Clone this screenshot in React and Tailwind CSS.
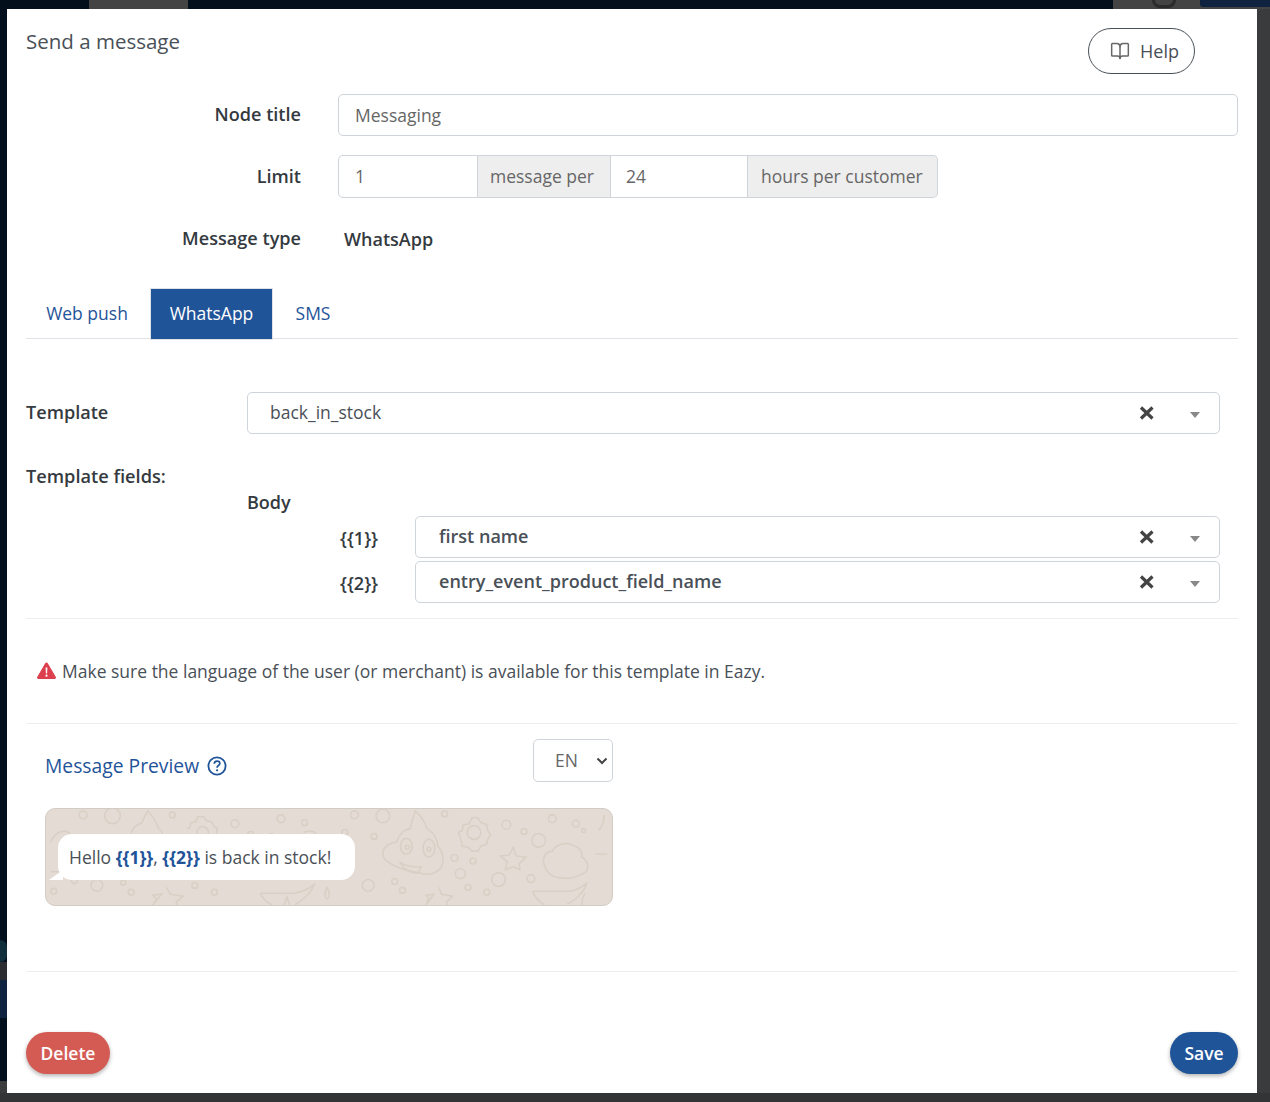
import { BookOpen } from 'lucide-react';

const Label = ({ children }) => (
  <div className="w-[275px] shrink-0 pb-[2px] text-right text-[18.1px] leading-[24px] font-semibold text-[#343a40]">{children}</div>
);

// react-select style field with clear cross and caret
const SelectField = ({ value, bold, className }) => (
  <div className={`flex h-[42px] items-center rounded-[5px] border border-[#ced4da] bg-white ${bold ? 'pl-[23px]' : 'pl-[22px]'} ${className}`}>
    <span className={`flex-1 text-[#495057] ${bold ? 'pb-[1px] text-[18.05px] font-semibold' : 'pb-[2px] text-[17.5px]'}`}>{value}</span>
    <svg width="16" height="16" viewBox="0 0 16 16" className="mr-[35px]">
      <path d="M2 2.5l11.5 11M13.5 2.5L2 13.5" stroke="#444" strokeWidth="3.2" />
    </svg>
    <svg width="10" height="6" viewBox="0 0 10 6" className="mr-[19px] mt-[3px]">
      <path d="M0 0h10L5 6z" fill="#888" />
    </svg>
  </div>
);

const dots = [
  [33, 6, 4], [63, 7, 8], [124, 6, 3], [188, 15, 4], [235, 10, 4], [259, 14, 3], [310, 6, 4], [330, 28, 3],
  [339, 7, 7], [402, 5, 3], [465, 16, 4.5], [483, 23, 3], [512, 10, 4], [536, 15, 3.5], [544, 22, 2], [498, 32, 7],
  [412, 50, 3.5], [431, 53, 3], [418, 66, 5], [457, 72, 7], [426, 80, 3], [445, 85, 3], [490, 71, 4], [324, 78, 6],
  [351, 74, 3], [359, 83, 3], [167, 85, 3], [147, 78, 3], [82, 85, 3], [74, 75, 2.5], [47, 78, 6], [24, 73, 3],
  [204, 26, 3], [225, 28, 3], [300, 24, 3], [3, 84, 3],
];

// chat wallpaper doodles behind the bubble
const WallpaperPattern = () => (
  <svg className="absolute inset-0 h-full w-full" viewBox="0 0 568 98" fill="none" stroke="#d9cfc5" strokeWidth="1.6">
    {dots.map(([cx, cy, r]) => (
      <circle key={`${cx}-${cy}`} cx={cx} cy={cy} r={r} />
    ))}
    {/* poop */}
    <path d="M82 25c2-8 8-10 11-11 2-5 4-9 6-12 5 5 9 12 11 18 3 2 4 4 4 6" />
    <path d="M339 46c0-8 8-12 14-12 3-10 10-14 14-14 1-6 3-12 5-18 6 5 10 12 12 18 8 5 11 12 11 18 6 6 7 16 3 22-5 7-14 8-22 5-14-2-26-6-33-12-3-2-4-4-4-7z" />
    <ellipse cx="363" cy="38" rx="6" ry="8" />
    <circle cx="364" cy="39" r="2" />
    <ellipse cx="386" cy="40" rx="6" ry="9" />
    <circle cx="386" cy="41" r="2" />
    <path d="M356 54c6 4 14 6 22 5l-3 6c-7 1-14-3-19-11z" />
    {/* gears */}
    <path d="M139 20l3-1 1-5 5-1 2-5h6l3 4 5 1 3 5 3 2-1 6-3 3v5" />
    <circle cx="155" cy="24" r="6" />
    <path d="M416 24l4-2 1-6 6-1 3-6 6 0 3 5 6 2 1 6 3 4-3 5-1 5-6 2-3 5-6 0-4-4-6-1-1-6z" />
    <circle cx="432" cy="24" r="7" />
    {/* stars */}
    <path d="M472 39l3 9 10 1-7 7 1 6-7-3-8 3 2-8-7-6 9-1z" />
    <path d="M396 80l3 7 11 2-6 6 1 4M383 98l3-7-3-3 8-1z" />
    <path d="M118 80l4 7 13 2-7 6 1 4M104 98l4-6-4-4 9-1z" />
    {/* clouds */}
    <path d="M504 58c-3-8 1-15 8-15 3-7 14-10 21-6 7 2 10 6 9 12 7 4 8 12 3 16-7 5-18 7-27 5-7-1-12-6-14-12z" />
    <path d="M0 34c4-12 16-14 20-8" />
    {/* bowls */}
    <path d="M492 84h38c7-1 12-4 17-8-2 8-12 18-20 21" />
    <path d="M214 86h34c8-1 16-5 21-9-3 8-12 16-20 21M214 86c2 6 8 10 12 12" />
    <path d="M492 84c2 6 7 11 12 14" />
    <path d="M282 80c-3 5-3 10 0 12 3-2 3-7 0-12z" />
    <path d="M258 24c8-4 15 0 16 8" />
    <path d="M0 64h18M556 46h12M559 22c4-4 6-8 6-16" />
    <path d="M542 98c0-6 3-12 3-12M238 98l3-8 3 8" />
  </svg>
);

const App = () => {
  return (
    <div className="flex h-[1102px] w-[1270px] flex-col overflow-hidden bg-[#3a3b3d] font-['Open_Sans',sans-serif]">
      {/* dimmed page behind the modal */}
      <div className="flex h-[9px] shrink-0 bg-[#03101c]">
        <div className="ml-[89px] w-[99px] bg-[#444444]" />
        <div className="ml-auto flex w-[87px] justify-center bg-[#444444] pl-[14px]">
          <div className="h-[8px] w-[24px] rounded-b-full border-x-[3px] border-b-[3px] border-[#2b2b2b]" />
        </div>
        <div className="w-[70px] bg-[#444444]">
          <div className="h-[7px] rounded-bl-[3px] bg-[#0f2340]" />
        </div>
      </div>
      <div className="flex h-[1084px] shrink-0">
        <div className="flex w-[7px] shrink-0 flex-col bg-[#020f1c]">
          <div className="h-[931px]" />
          <div className="h-[22px] rounded-r-full bg-[#12303c]" />
          <div className="h-[18px] bg-[#2b2d30]" />
          <div className="h-[38px] bg-[#0f2340]" />
          <div className="h-[63px]" />
          <div className="flex-1 bg-[#3a3b3d]" />
        </div>
        <div className="w-[1250px] shrink-0 bg-white px-[19px] text-[#495057]">
          <div className="flex items-start justify-between">
            <h2 className="mt-[18px] text-[20.5px] leading-[28px] font-medium text-[#495057]">Send a message</h2>
            <button className="mt-[19px] mr-[43px] flex h-[46px] w-[107px] items-center gap-[10px] rounded-full border border-[#495057] pl-[21px] text-[18px] text-[#495057]">
              <BookOpen size={20} strokeWidth={1.8} className="text-[#666]" />
              Help
            </button>
          </div>

          <div className="mt-[20px] flex items-center">
            <Label>Node title</Label>
            <div className="ml-[37px] flex h-[42px] flex-1 items-center rounded-[5px] border border-[#ced4da] px-4 text-[17.5px] text-[#666]">
              Messaging
            </div>
          </div>

          <div className="mt-[19px] flex items-center">
            <Label>Limit</Label>
            <div className="ml-[37px] flex h-[43px] text-[17.5px] text-[#666]">
              <div className="flex w-[140px] items-center rounded-l-[5px] border border-[#ced4da] px-4">1</div>
              <div className="flex w-[133px] items-center border-y border-r border-[#ced4da] bg-[#eeeeee] pl-[12px]">message per</div>
              <div className="flex w-[137px] items-center border-y border-r border-[#ced4da] px-[15px]">24</div>
              <div className="flex w-[190px] items-center rounded-r-[5px] border-y border-r border-[#ced4da] bg-[#eeeeee] pl-[13px]">hours per customer</div>
            </div>
          </div>

          <div className="mt-[28px] flex items-center">
            <Label>Message type</Label>
            <div className="ml-[43px] text-[18px] leading-[24px] font-semibold text-[#343a40]">WhatsApp</div>
          </div>

          <div className="mt-[36px] flex h-[51px] items-start border-b border-[#dee2e6] text-[17.5px] text-[#1f5499]">
            <div className="flex h-[50px] w-[124px] items-center justify-center pr-[2px]">Web push</div>
            <div className="flex h-[52px] w-[123px] items-center justify-center border border-[#dee2e6] bg-[#1f5499] pb-[2px] text-white">WhatsApp</div>
            <div className="flex h-[50px] w-[80px] items-center justify-center">SMS</div>
          </div>

          <div className="mt-[53px] flex items-center">
            <div className="w-[221px] pb-[1px] text-[18.1px] font-semibold text-[#343a40]">Template</div>
            <SelectField value="back_in_stock" className="w-[973px]" />
          </div>

          <div className="mt-[30px] text-[18.2px] leading-[24px] font-semibold text-[#343a40]">Template fields:</div>
          <div className="mt-[2px] ml-[221px] text-[18px] leading-[24px] font-semibold text-[#343a40]">Body</div>
          <div className="mt-[2px] ml-[314px] flex items-center">
            <div className="w-[75px] pt-[3px] text-[18px] font-semibold text-[#343a40]">{'{{1}}'}</div>
            <SelectField value="first name" bold className="w-[805px]" />
          </div>
          <div className="mt-[3px] ml-[314px] flex items-center">
            <div className="w-[75px] pt-[3px] text-[18px] font-semibold text-[#343a40]">{'{{2}}'}</div>
            <SelectField value="entry_event_product_field_name" bold className="w-[805px]" />
          </div>

          <div className="mt-[15px] flex h-[106px] items-center border-y border-[#eeeeee] pl-[11px] text-[17.5px] text-[#495057]">
            <svg width="19" height="17" viewBox="0 0 19 17" className="mr-[6px] mb-[1px]">
              <path d="M9.5.5c.6 0 1 .3 1.3.8l8 13.6c.6 1-.1 2.1-1.3 2.1H1.5c-1.2 0-1.9-1.1-1.3-2.1l8-13.6c.3-.5.7-.8 1.3-.8z" fill="#dc3f4d" />
              <path d="M8.6 5.5h1.8l-.3 6H8.9zM9.5 12.6a1.1 1.1 0 1 1 0 2.2 1.1 1.1 0 0 1 0-2.2z" fill="#fff" />
            </svg>
            Make sure the language of the user (or merchant) is available for this template in Eazy.
          </div>

          <div className="mt-[15px] ml-[19px] flex w-[568px] items-center justify-between">
            <div className="flex items-center gap-[8px] pt-[10px] text-[19.3px] leading-[26px] font-medium text-[#1f5499]">
              Message Preview
              <svg width="20" height="20" viewBox="0 0 20 20" fill="none">
                <circle cx="10" cy="10" r="8.6" stroke="#1f5499" strokeWidth="1.8" />
                <path d="M7.3 7.7c.1-1.6 1.2-2.5 2.8-2.5 1.6 0 2.7.9 2.7 2.2 0 1-.5 1.5-1.4 2.1-.9.6-1.3 1-1.3 2v.3" stroke="#1f5499" strokeWidth="1.7" />
                <circle cx="10.1" cy="14.3" r="1.1" fill="#1f5499" />
              </svg>
            </div>
            <div className="flex h-[43px] w-[80px] items-center rounded-[5px] border border-[#ced4da] pl-[21px] text-[17.5px] text-[#666]">
              EN
              <svg width="12" height="8" viewBox="0 0 12 8" fill="none" className="ml-[18px]">
                <path d="M1.5 1.5L6 6l4.5-4.5" stroke="#444" strokeWidth="2" />
              </svg>
            </div>
          </div>

          <div className="relative mt-[26px] ml-[19px] flex h-[98px] w-[568px] items-center overflow-hidden rounded-[10px] border border-[#d1ccc6] bg-[#e4dcd4]">
            <WallpaperPattern />
            <div className="relative ml-[12px] flex h-[46px] w-[297px] items-center rounded-[14px] bg-white pl-[11px] text-[17.5px] text-[#495057]">
              <span className="absolute bottom-0 left-[-9px] h-0 w-0 border-b-[10px] border-l-[14px] border-b-white border-l-transparent" />
              <span>
                Hello <b className="font-bold text-[#1f5499]">{'{{1}}'}</b>, <b className="font-bold text-[#1f5499]">{'{{2}}'}</b> is back in stock!
              </span>
            </div>
          </div>

          <div className="mt-[65px] flex h-[103px] items-end justify-between border-t border-[#eeeeee]">
            <button className="h-[42px] w-[84px] rounded-full bg-[#d45b54] text-[17.5px] font-semibold text-white shadow-[0_2px_4px_rgba(0,0,0,0.3)]">Delete</button>
            <button className="h-[42px] w-[68px] rounded-full bg-[#1f5499] text-[17.5px] font-semibold text-white shadow-[0_2px_4px_rgba(0,0,0,0.3)]">Save</button>
          </div>
        </div>
        <div className="flex-1 bg-[#3a3b3d]" />
      </div>
      <div className="flex-1 bg-[#333436]" />
    </div>
  );
};

export default App;
